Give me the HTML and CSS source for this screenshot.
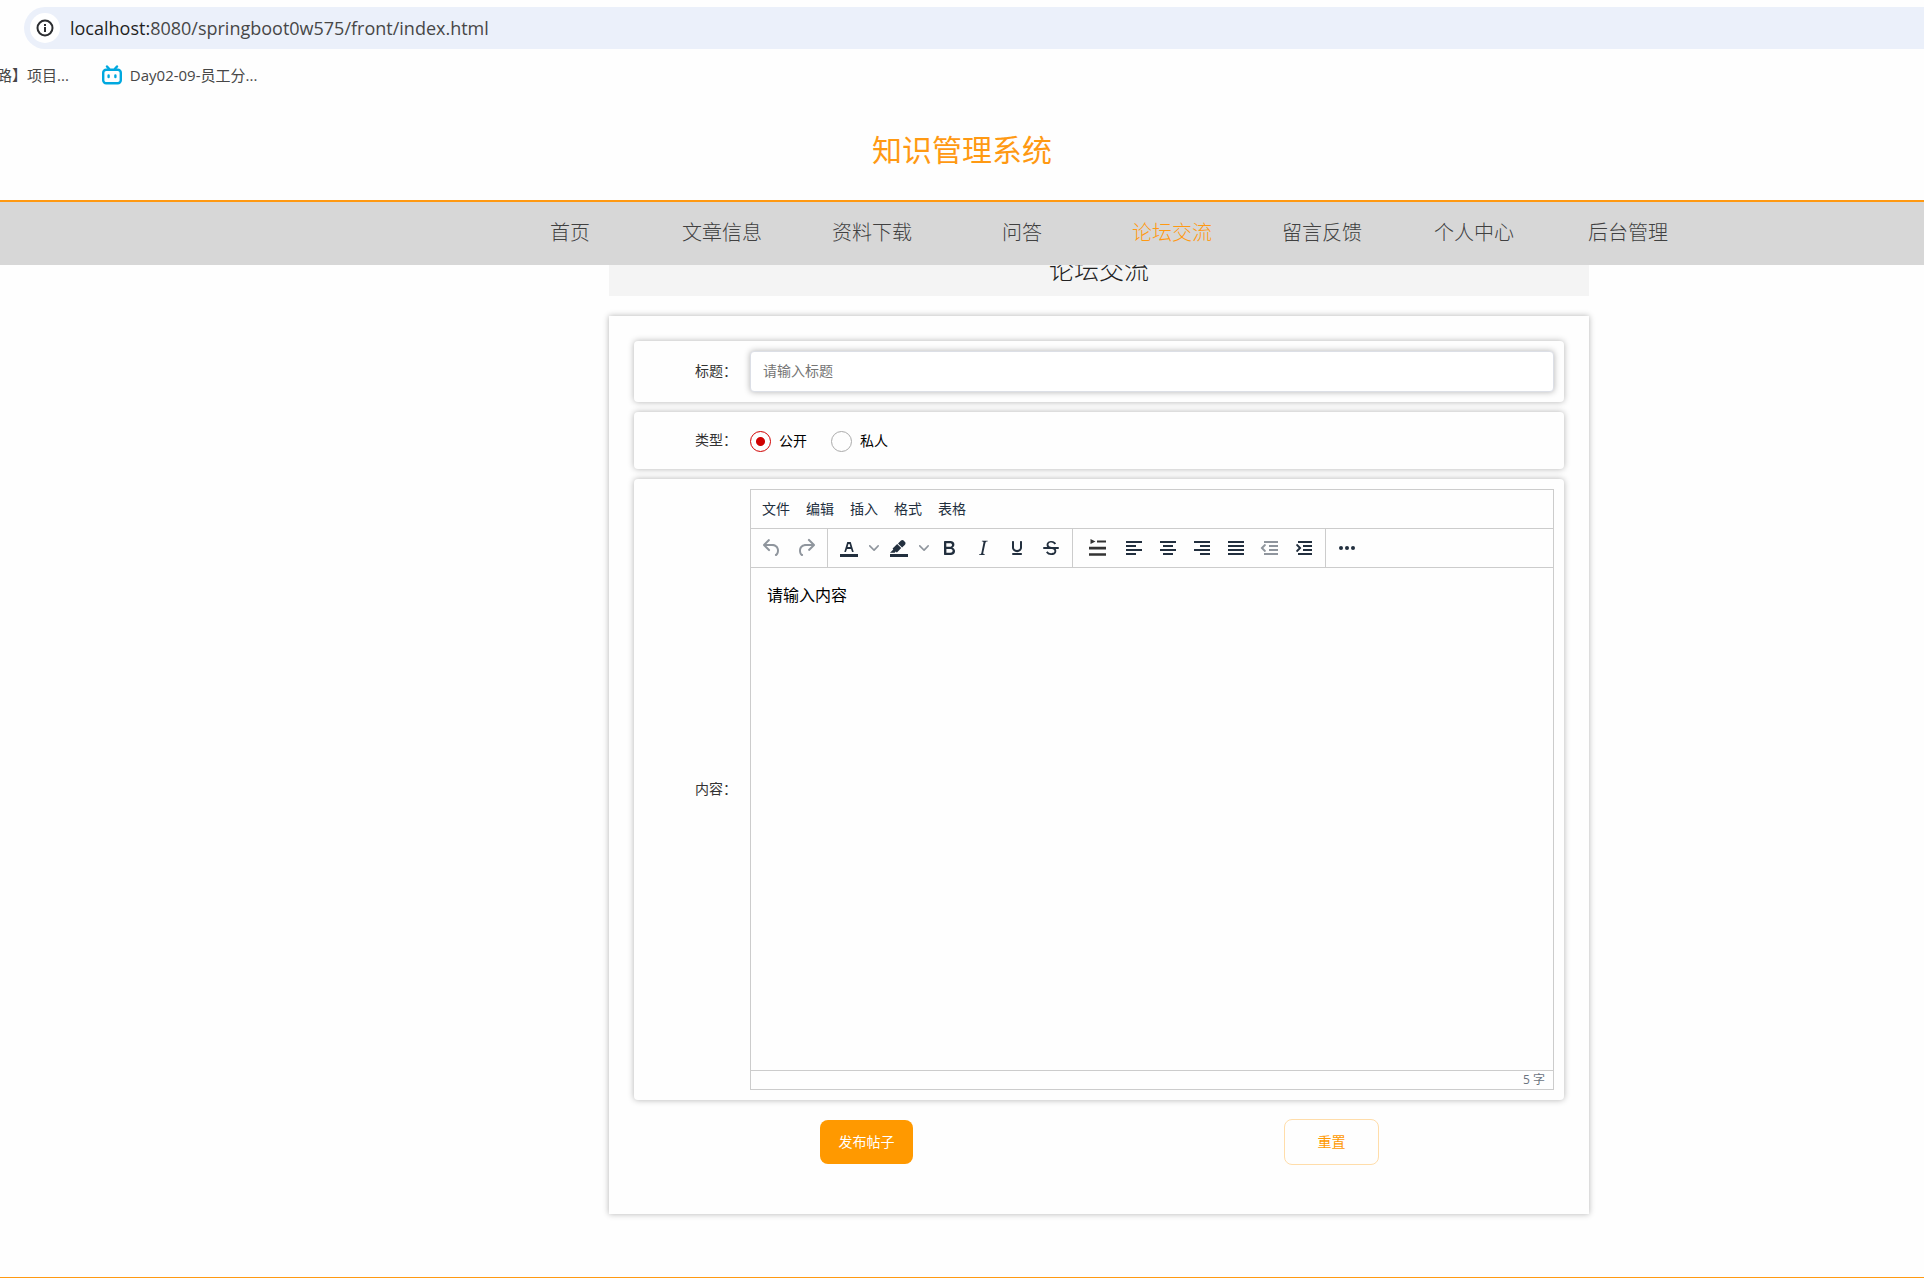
FILE: index.html
```html
<!DOCTYPE html>
<html lang="zh-CN">
<head>
<meta charset="utf-8">
<title>知识管理系统</title>
<link rel="stylesheet" href="styles.css">
</head>
<body>
<div class="browser">
  <div class="address-bar">
    <button class="site-info" type="button" aria-label="网站信息">
      <svg width="18" height="18" viewBox="0 0 18 18" fill="none" stroke="#2b2d30" stroke-width="2"><circle cx="9" cy="9" r="7.5"/><path d="M9 8v5M9 5v2"/></svg>
    </button>
    <div class="address"><span class="address-host">localhost:</span>8080/springboot0w575/front/index.html</div>
  </div>
  <div class="bookmarks">
    <a class="bookmark" href="#">路】项目...</a>
    <a class="bookmark" href="#">
      <svg width="20" height="20" viewBox="0 0 20 20" fill="none" stroke="#00a8df" stroke-width="2.4" stroke-linecap="round"><rect x="1.2" y="4.7" width="17.6" height="13.6" rx="3"/><path d="M5 1.4l2 2.4M15 1.4l-2 2.4"/><path d="M6.6 10.4v1.6M13.4 10.4v1.6"/></svg>
      Day02-09-员工分...
    </a>
  </div>
</div>

<header class="site-header">
  <h1 class="site-title">知识管理系统</h1>
</header>
<nav class="site-nav">
  <a class="nav-item nav-item-wide" href="#">首页</a>
  <a class="nav-item" href="#">文章信息</a>
  <a class="nav-item" href="#">资料下载</a>
  <a class="nav-item" href="#">问答</a>
  <a class="nav-item nav-item-active" href="#">论坛交流</a>
  <a class="nav-item" href="#">留言反馈</a>
  <a class="nav-item nav-item-wide" href="#">个人中心</a>
  <a class="nav-item nav-item-wide" href="#">后台管理</a>
</nav>

<main class="content">
  <h2 class="page-title">论坛交流</h2>
  <form class="post-form">
    <div class="form-row">
      <label class="form-label" for="title">标题：</label>
      <input class="text-input" id="title" type="text" placeholder="请输入标题">
    </div>
    <div class="form-row form-row-type" role="radiogroup" aria-labelledby="type-label">
      <span class="form-label" id="type-label">类型：</span>
      <div class="radio-group">
        <label class="radio"><input class="radio-input" type="radio" name="type" checked>公开</label>
        <label class="radio"><input class="radio-input" type="radio" name="type">私人</label>
      </div>
    </div>
    <div class="form-row">
      <label class="form-label" for="body">内容：</label>
      <div class="editor">
        <div class="editor-menu">
          <button class="menu-item" type="button">文件</button>
          <button class="menu-item" type="button">编辑</button>
          <button class="menu-item" type="button">插入</button>
          <button class="menu-item" type="button">格式</button>
          <button class="menu-item" type="button">表格</button>
        </div>
        <div class="toolbar">
          <div class="tool-group">
            <button class="tool" type="button" aria-label="撤销" disabled><svg class="icon" viewBox="0 0 24 24"><path d="M6.4 8H12c3.7 0 6.2 2 6.8 5.1.6 2.7-.4 5.6-2.3 6.8a1 1 0 01-1-1.8c1.1-.6 1.8-2.7 1.4-4.6-.5-2.1-2.1-3.5-4.9-3.5H6.4l3.3 3.3a1 1 0 11-1.4 1.4l-5-5a1 1 0 010-1.4l5-5a1 1 0 011.4 1.4L6.4 8z"/></svg></button>
            <button class="tool" type="button" aria-label="重做" disabled><svg class="icon" viewBox="0 0 24 24"><path d="M17.6 10H12c-2.8 0-4.4 1.4-4.9 3.5-.4 2 .3 4 1.4 4.6a1 1 0 11-1 1.8c-2-1.2-2.9-4.1-2.3-6.8.6-3 3-5.1 6.8-5.1h5.6l-3.3-3.3a1 1 0 111.4-1.4l5 5a1 1 0 010 1.4l-5 5a1 1 0 01-1.4-1.4l3.3-3.3z"/></svg></button>
          </div>
          <div class="tool-group">
            <button class="tool" type="button" aria-label="文字颜色"><svg class="icon" viewBox="0 0 24 24"><path d="M3 18h18v3H3z"/><path d="M8.7 16h-.8a.5.5 0 01-.5-.6l2.7-9c.1-.3.3-.4.5-.4h2.8c.2 0 .4.1.5.4l2.7 9a.5.5 0 01-.5.6h-.8a.5.5 0 01-.4-.4l-.7-2.2c0-.3-.3-.4-.5-.4h-3.4c-.2 0-.4.1-.5.4l-.7 2.2c0 .3-.2.4-.4.4zm2.6-7.6l-.6 2a.5.5 0 00.5.6h1.6a.5.5 0 00.5-.6l-.6-2c0-.3-.3-.4-.5-.4h-.4c-.2 0-.4.1-.5.4z"/></svg></button>
            <button class="tool-arrow" type="button" aria-label="选择文字颜色"><svg class="chevron" viewBox="0 0 10 10"><path d="M8.7 2.2c.3-.3.8-.3 1 0 .4.4.4.9 0 1.2L5.7 7.8c-.3.3-.9.3-1.2 0L.2 3.4a.8.8 0 010-1.2c.3-.3.8-.3 1.1 0L5 6l3.7-3.8z"/></svg></button>
            <button class="tool" type="button" aria-label="背景颜色"><svg class="icon" viewBox="0 0 24 24"><path d="M3 18h18v3H3z"/><path d="M7.7 16.7H3l3.3-3.3-.7-.8L10.2 8l4 4.1-4 4.2c-.2.2-.6.2-.8 0l-.6-.7-1.1 1.1zm5-7.5L11 7.4l3-2.9a2 2 0 012.6 0L18 6c.7.7.7 2 0 2.7l-2.9 2.9-1.8-1.8-.5-.6"/></svg></button>
            <button class="tool-arrow" type="button" aria-label="选择背景颜色"><svg class="chevron" viewBox="0 0 10 10"><path d="M8.7 2.2c.3-.3.8-.3 1 0 .4.4.4.9 0 1.2L5.7 7.8c-.3.3-.9.3-1.2 0L.2 3.4a.8.8 0 010-1.2c.3-.3.8-.3 1.1 0L5 6l3.7-3.8z"/></svg></button>
            <button class="tool" type="button" aria-label="粗体"><svg class="icon" viewBox="0 0 24 24"><path d="M7.8 19c-.3 0-.5 0-.6-.2l-.2-.5V5.7c0-.2 0-.4.2-.5l.6-.2h5c1.5 0 2.7.3 3.5 1 .7.6 1.1 1.4 1.1 2.5a3 3 0 01-.6 1.9c-.4.6-1 1-1.6 1.2.4.1.9.3 1.3.6s.8.7 1 1.2c.4.4.5 1 .5 1.6 0 1.3-.4 2.3-1.3 3-.8.7-2.1 1-3.8 1H7.8zm5-8.3c.6 0 1.2-.1 1.6-.5.4-.3.6-.7.6-1.3 0-1.1-.8-1.7-2.3-1.7H9.3v3.5h3.4zm.5 6c.7 0 1.3-.1 1.7-.4.4-.4.6-.9.6-1.5s-.2-1-.7-1.4c-.4-.3-1-.4-2-.4H9.4v3.8h4z"/></svg></button>
            <button class="tool" type="button" aria-label="斜体"><svg class="icon" viewBox="0 0 24 24"><path d="M16.7 4.7l-.1.9h-.3c-.6 0-1 0-1.4.3-.3.3-.4.6-.5 1.1l-2.1 9.8v.6c0 .5.4.8 1.4.8h.2l-.2.8H8l.2-.8h.2c1.1 0 1.8-.5 2-1.5l2-9.8.1-.5c0-.6-.4-.8-1.4-.8h-.3l.2-.9h5.8z"/></svg></button>
            <button class="tool" type="button" aria-label="下划线"><svg class="icon" viewBox="0 0 24 24"><path d="M16 5c.6 0 1 .4 1 1v5.5a4 4 0 01-.4 1.8l-1 1.4a5.3 5.3 0 01-5.5 1 5 5 0 01-1.6-1c-.5-.4-.8-.9-1.1-1.4a4 4 0 01-.4-1.8V6c0-.6.4-1 1-1s1 .4 1 1v5.5c0 .3 0 .6.2 1l.6.7a3.3 3.3 0 002.2.8 3.4 3.4 0 002.2-.8c.3-.2.4-.5.6-.8l.2-.9V6c0-.6.4-1 1-1zM8 17h8c.6 0 1 .4 1 1s-.4 1-1 1H8a1 1 0 010-2z"/></svg></button>
            <button class="tool" type="button" aria-label="删除线"><svg class="icon" viewBox="0 0 24 24"><path d="M15.6 8.5c-.5-.7-1-1.1-1.3-1.3-.6-.4-1.3-.6-2-.6-2.7 0-2.8 1.7-2.8 2.1 0 1.6 1.8 2 3.2 2.3 4.4.9 4.6 2.8 4.6 3.9 0 1.4-.7 4.1-5 4.1A6.2 6.2 0 017 16.4l1.5-1.1c.4.6 1.6 2 3.7 2 1.6 0 2.5-.4 3-1.2.4-.8.3-2-.8-2.6-.7-.4-1.6-.7-2.9-1-1-.2-3.9-.8-3.9-3.6C7.6 6 10.3 5 12.4 5c2.9 0 4.2 1.6 4.7 2.4l-1.5 1.1z"/><path d="M5 11h14a1 1 0 010 2H5a1 1 0 010-2z"/></svg></button>
          </div>
          <div class="tool-group">
            <button class="tool tool-wide" type="button" aria-label="行高"><svg class="icon icon-gray" viewBox="0 0 24 24"><path d="M5.500 3l5 2.500-5 2.500zM12 4.500h9v2h-9zM4 10.800h17v2.600H4zM4 17.300h17v2.400H4z"/></svg></button>
            <button class="tool" type="button" aria-label="左对齐"><svg class="icon" viewBox="0 0 24 24"><path d="M4 5h16v2H4zM4 9h10v2H4zM4 13h16v2H4zM4 17h10v2H4z"/></svg></button>
            <button class="tool" type="button" aria-label="居中"><svg class="icon" viewBox="0 0 24 24"><path d="M4 5h16v2H4zM7 9h10v2H7zM4 13h16v2H4zM7 17h10v2H7z"/></svg></button>
            <button class="tool" type="button" aria-label="右对齐"><svg class="icon" viewBox="0 0 24 24"><path d="M4 5h16v2H4zM10 9h10v2H10zM4 13h16v2H4zM10 17h10v2H10z"/></svg></button>
            <button class="tool" type="button" aria-label="两端对齐"><svg class="icon" viewBox="0 0 24 24"><path d="M4 5h16v2H4zM4 9h16v2H4zM4 13h16v2H4zM4 17h16v2H4z"/></svg></button>
            <button class="tool" type="button" aria-label="减少缩进" disabled><svg class="icon" viewBox="0 0 24 24"><path d="M6 5h14v2H6zM11 9h9v2h-9zM11 13h9v2h-9zM6 17h14v2H6zM7.600 9.800L5.300 12l2.300 2.200a1 1 0 01-1.300 1.500L3 12.600a1 1 0 010-1.200l3.300-3.100a1 1 0 011.300 1.500z"/></svg></button>
            <button class="tool" type="button" aria-label="增加缩进"><svg class="icon" viewBox="0 0 24 24"><path d="M6 5h14v2H6zM11 9h9v2h-9zM11 13h9v2h-9zM6 17h14v2H6zM4.400 14.200L6.700 12 4.400 9.800a1 1 0 011.300-1.500L9 11.400a1 1 0 010 1.200l-3.300 3.100a1 1 0 01-1.300-1.500z"/></svg></button>
          </div>
          <div class="tool-group">
            <button class="tool" type="button" aria-label="更多"><svg class="icon" viewBox="0 0 24 24"><circle cx="6" cy="12" r="2"/><circle cx="12" cy="12" r="2"/><circle cx="18" cy="12" r="2"/></svg></button>
          </div>
        </div>
        <textarea class="editor-body" id="body">请输入内容</textarea>
        <div class="editor-status">5 字</div>
      </div>
    </div>
    <div class="form-actions">
      <button class="btn btn-primary" type="button">发布帖子</button>
      <button class="btn btn-plain" type="reset">重置</button>
    </div>
  </form>
</main>
<footer class="site-footer"></footer>
</body>
</html>
```
FILE: styles.css
```css
* {
  box-sizing: border-box;
}

body {
  margin: 0;
  background: #fefefe;
  color: #333;
  font: 14px/20px "Open Sans", "Noto Sans CJK SC", sans-serif;
}

a {
  color: inherit;
  text-decoration: none;
}

button {
  margin: 0;
  padding: 0;
  border: 0;
  background: none;
  color: inherit;
  font: inherit;
}

/* Browser strip */
.browser {
  padding-top: 7px;
  overflow: hidden;
}

.address-bar {
  display: flex;
  align-items: center;
  gap: 10px;
  height: 42px;
  margin-left: 24px;
  padding-left: 6px;
  border-radius: 21px 0 0 21px;
  background: #ebf0fa;
}

.site-info {
  display: flex;
  align-items: center;
  justify-content: center;
  width: 30px;
  height: 30px;
  border-radius: 50%;
  background: #fff;
}

.address {
  color: #474747;
  font-size: 18px;
}

.address-host {
  color: #1f1f1f;
}

.bookmarks {
  display: flex;
  align-items: center;
  gap: 33px;
  height: 52px;
  color: #474747;
  font-size: 15px;
}

.bookmark {
  display: flex;
  align-items: center;
  gap: 8px;
}

.bookmark:first-child {
  margin-left: -3px;
}

/* Site header */
.site-header {
  display: flex;
  align-items: center;
  justify-content: center;
  height: 99px;
  padding-bottom: 2px;
}

.site-title {
  margin: 0;
  color: #ff9912;
  font-size: 30px;
  font-weight: 400;
  line-height: 40px;
}

.site-nav {
  position: relative;
  z-index: 1;
  display: flex;
  justify-content: center;
  padding: 0 0 2px 274px;
  border-top: 2px solid #ff9912;
  background: #d7d7d7;
}

.nav-item {
  width: 150px;
  color: #404040;
  font-size: 20px;
  font-weight: 300;
  line-height: 61px;
  text-align: center;
}

.nav-item-wide {
  width: 154px;
}

.nav-item-active {
  color: #ff9912;
}

/* Content */
.content {
  padding: 0 0 63px 274px;
}

.page-title {
  max-width: 980px;
  margin: -21px auto 20px;
  padding-bottom: 2px;
  background: #f4f4f4;
  color: #222;
  font-size: 25px;
  font-weight: 300;
  line-height: 50px;
  text-align: center;
}

.post-form {
  display: flex;
  flex-direction: column;
  gap: 10px;
  max-width: 980px;
  margin: 0 auto;
  padding: 25px 25px 49px;
  box-shadow: 0 0 6px rgba(0, 0, 0, 0.3);
}

.form-row {
  display: flex;
  align-items: center;
  padding: 10px;
  border-radius: 4px;
  box-shadow: 0 0 6px rgba(0, 0, 0, 0.3);
}

.form-row-type {
  min-height: 57px;
}

.form-label {
  flex: none;
  width: 106px;
  padding: 0 13px 2px 0;
  text-align: right;
}

.text-input {
  flex: 1;
  height: 41px;
  padding: 0 12px 2px;
  border: 1px solid #dcdfe6;
  border-radius: 4px;
  background: #fff;
  box-shadow: 0 0 6px rgba(0, 0, 0, 0.3);
  color: #333;
  font: inherit;
}

.text-input::placeholder {
  color: #757575;
}

.radio-group {
  display: flex;
  gap: 24px;
  padding-top: 1px;
}

.radio {
  display: flex;
  align-items: center;
  gap: 8px;
  color: #000;
}

.radio-input {
  appearance: none;
  width: 21px;
  height: 21px;
  margin: 0;
  border: 1px solid #aaa;
  border-radius: 50%;
}

.radio-input:checked {
  border-color: #d00000;
  background: radial-gradient(circle, #d00000 4px, transparent 5px);
}

/* Rich text editor */
.editor {
  flex: 1;
  border: 1px solid #ccc;
  color: #222f3e;
}

.editor-menu {
  display: flex;
  gap: 16px;
  height: 38px;
  padding: 0 11px;
}

.toolbar {
  display: flex;
  height: 40px;
  border: solid #ccc;
  border-width: 1px 0;
}

.tool-group {
  display: flex;
  padding: 0 4px;
}

.tool-group + .tool-group {
  border-left: 1px solid #ccc;
}

.tool {
  display: flex;
  align-items: center;
  justify-content: center;
  width: 34px;
}

.tool-wide {
  width: 40px;
}

.tool:disabled {
  opacity: 0.5;
}

.tool-arrow {
  display: flex;
  align-items: center;
  justify-content: center;
  width: 16px;
}

.icon {
  width: 24px;
  height: 24px;
  fill: #222f3e;
}

.icon-gray {
  fill: #333;
}

.chevron {
  width: 10px;
  height: 10px;
  fill: #222f3e;
  opacity: 0.5;
}

.editor-body {
  display: block;
  width: 100%;
  height: 502px;
  padding: 15px 16px;
  border: 0;
  background: none;
  color: #000;
  font: inherit;
  font-size: 16px;
  line-height: 24px;
  resize: none;
}

.editor-status {
  padding-right: 8px;
  border-top: 1px solid #ccc;
  color: #6b747f;
  font-size: 12px;
  line-height: 18px;
  text-align: right;
}

/* Actions */
.form-actions {
  display: grid;
  grid-template-columns: 1fr 1fr;
  align-items: center;
  justify-items: center;
  padding-top: 9px;
}

.btn {
  border-radius: 8px;
  line-height: 44px;
}

.btn-primary {
  width: 93px;
  background: #ff9900;
  color: #fff;
}

.btn-plain {
  width: 95px;
  border: 1px solid #ffddaa;
  color: #ff9900;
}

.site-footer {
  border-top: 1px solid #ff9912;
}
```
